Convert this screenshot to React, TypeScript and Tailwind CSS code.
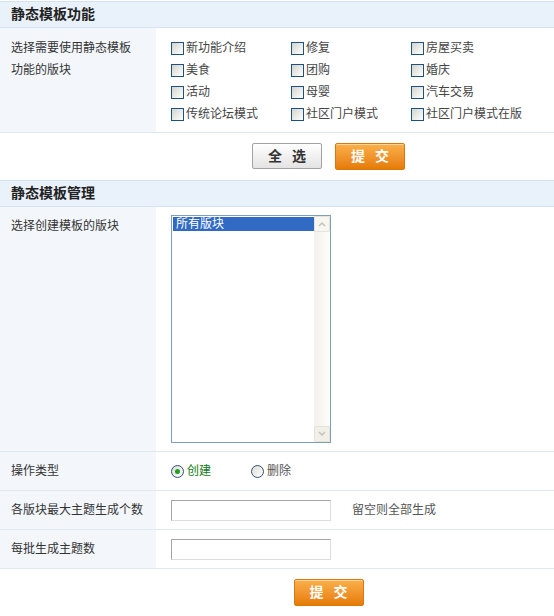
import React, { useState } from "react";

const modules = [
  "新功能介绍", "修复", "房屋买卖",
  "美食", "团购", "婚庆",
  "活动", "母婴", "汽车交易",
  "传统论坛模式", "社区门户模式", "社区门户模式在版",
];

function SectionTitle({ title }: { title: string }) {
  return (
    <div className="h-[27px] border-y border-[#d5e3f1] bg-[#e9f1fa] px-[11px] flex items-center text-[14px] font-bold text-[#222]">
      {title}
    </div>
  );
}

function CheckBox({ label, checked, onToggle }: { label: string; checked: boolean; onToggle: () => void }) {
  return (
    <label className="flex items-center h-[22px] cursor-pointer" onClick={onToggle}>
      <span className="w-[13px] h-[13px] border border-[#1c5180] bg-gradient-to-br from-[#d4d4ce] to-white flex items-center justify-center mr-[2px]">
        {checked && (
          <svg width="8" height="8" viewBox="0 0 8 8">
            <path d="M1 4l2 2 4-5" stroke="#21a121" strokeWidth="1.6" fill="none" />
          </svg>
        )}
      </span>
      <span className="text-[#444]">{label}</span>
    </label>
  );
}

function Radio({ label, checked, onPick, green }: { label: string; checked: boolean; onPick: () => void; green?: boolean }) {
  return (
    <label className="flex items-center cursor-pointer" onClick={onPick}>
      <span className="w-[13px] h-[13px] rounded-full border border-[#2f4f76] bg-gradient-to-br from-[#dcdcd6] to-white flex items-center justify-center mr-[3px]">
        {checked && <span className="w-[5px] h-[5px] rounded-full bg-[#21a121]" />}
      </span>
      <span className={green ? "text-[#137a13]" : "text-[#555]"}>{label}</span>
    </label>
  );
}

function Row({ label, children, className }: { label: React.ReactNode; children: React.ReactNode; className?: string }) {
  return (
    <div className={"flex border-b border-[#dfe8f1] " + (className || "")}>
      <div className="w-[156px] shrink-0 bg-[#f3f7fc] px-[11px]">{label}</div>
      <div className="flex-1 pl-[15px]">{children}</div>
    </div>
  );
}

function GrayButton({ children }: { children: React.ReactNode }) {
  return (
    <button className="w-[70px] h-[26px] border border-[#a3a3a3] rounded-[2px] bg-gradient-to-b from-white to-[#e3e3e3] text-[14px] font-bold text-[#333] tracking-[3px] pl-[3px]">
      {children}
    </button>
  );
}

function OrangeButton({ children }: { children: React.ReactNode }) {
  return (
    <button className="w-[70px] h-[27px] border border-[#d8790e] rounded-[2px] bg-gradient-to-b from-[#fbb048] to-[#e67b00] text-[14px] font-bold text-white shadow-[inset_0_1px_0_#fdd49a] tracking-[3px] pl-[3px]">
      {children}
    </button>
  );
}

export default function App() {
  const [picked, setPicked] = useState<boolean[]>(modules.map(() => false));
  const [op, setOp] = useState<"create" | "delete">("create");

  const toggle = (i: number) => setPicked(p => p.map((v, j) => (j === i ? !v : v)));

  return (
    <div className="w-[554px] min-h-[616px] bg-white pt-px text-[12px] text-[#333] font-['Liberation_Sans','Noto_Sans_CJK_SC',sans-serif]">
      <SectionTitle title="静态模板功能" />
      <Row label={<div className="pt-[9px] leading-[22px]">选择需要使用静态模板<br />功能的版块</div>}>
        <div className="grid grid-cols-[120px_120px_120px] pt-[9px] pb-[7px]">
          {modules.map((m, i) => (
            <CheckBox key={m} label={m} checked={picked[i]} onToggle={() => toggle(i)} />
          ))}
        </div>
      </Row>
      <div className="h-[47px] flex justify-center items-start gap-[13px] pt-[10px] pl-[103px]">
        <GrayButton>全 选</GrayButton>
        <OrangeButton>提 交</OrangeButton>
      </div>

      <SectionTitle title="静态模板管理" />
      <Row label={<div className="pt-[10px] leading-[18px]">选择创建模板的版块</div>}>
        <div className="py-[8px]">
          <div className="w-[160px] h-[228px] border border-[#7f9db9] bg-white flex">
            <div className="flex-1 pt-px pl-px">
              <div className="h-[14px] bg-[#316ac5] text-white leading-[14px] pl-[3px]">所有版块</div>
            </div>
            <div className="w-[16px] flex flex-col bg-gradient-to-r from-[#f3f1ea] to-[#fdfdfb]">
              <div className="h-[16px] border border-[#e6e3d8] rounded-[2px] bg-[#f7f6f1] flex items-center justify-center">
                <svg width="8" height="6" viewBox="0 0 8 6">
                  <path d="M1 5l3-3 3 3" stroke="#c5c2b5" strokeWidth="1.5" fill="none" />
                </svg>
              </div>
              <div className="flex-1" />
              <div className="h-[16px] border border-[#e6e3d8] rounded-[2px] bg-[#f0efe8] flex items-center justify-center">
                <svg width="8" height="6" viewBox="0 0 8 6">
                  <path d="M1 1l3 3 3-3" stroke="#c5c2b5" strokeWidth="1.5" fill="none" />
                </svg>
              </div>
            </div>
          </div>
        </div>
      </Row>
      <Row className="h-[39px]" label={<div className="leading-[38px]">操作类型</div>}>
        <div className="h-full flex items-center">
          <div className="w-[80px]">
            <Radio label="创建" green checked={op === "create"} onPick={() => setOp("create")} />
          </div>
          <Radio label="删除" checked={op === "delete"} onPick={() => setOp("delete")} />
        </div>
      </Row>
      <Row className="h-[39px]" label={<div className="leading-[38px]">各版块最大主题生成个数</div>}>
        <div className="h-full flex items-center">
          <input className="w-[160px] h-[21px] border border-[#a5a5a5] border-r-[#dcdcdc] border-b-[#dcdcdc] bg-white outline-none px-1" />
          <span className="ml-[21px] text-[#555]">留空则全部生成</span>
        </div>
      </Row>
      <Row className="h-[39px]" label={<div className="leading-[38px]">每批生成主题数</div>}>
        <div className="h-full flex items-center">
          <input className="w-[160px] h-[21px] border border-[#a5a5a5] border-r-[#dcdcdc] border-b-[#dcdcdc] bg-white outline-none px-1" />
        </div>
      </Row>
      <div className="flex justify-center pt-[10px] pl-[103px]">
        <OrangeButton>提 交</OrangeButton>
      </div>
    </div>
  );
}
